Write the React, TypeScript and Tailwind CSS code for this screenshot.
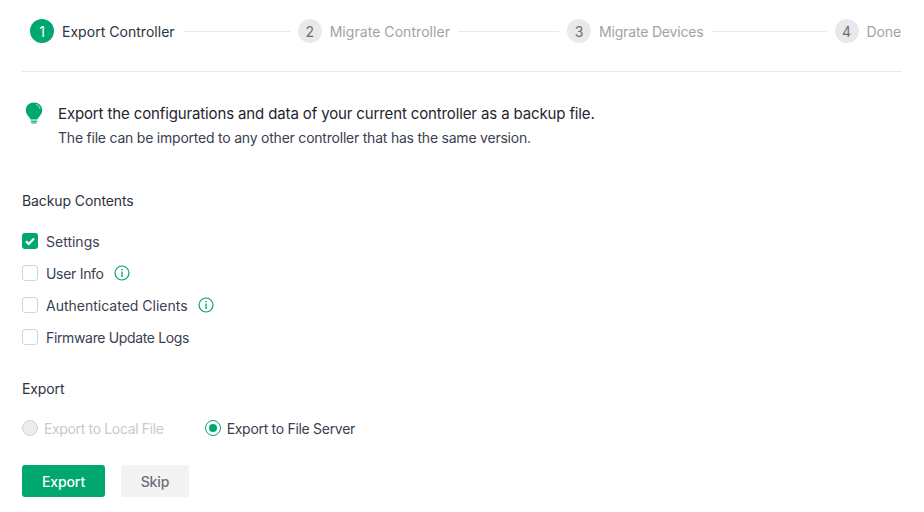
const steps = [
  { n: 1, label: 'Export Controller', line: 'w-[107px]', track: 'tracking-[0.03px]' },
  { n: 2, label: 'Migrate Controller', line: 'w-[101px]', track: 'tracking-[0.05px]' },
  { n: 3, label: 'Migrate Devices', line: 'w-[115px]', track: 'tracking-[-0.17px]' },
  { n: 4, label: 'Done', line: '', track: 'tracking-[-0.1px]' },
];

const options = [
  { label: 'Settings', checked: true, info: false, track: 'tracking-[0px]' },
  { label: 'User Info', checked: false, info: true, track: 'tracking-[-0.3px]' },
  { label: 'Authenticated Clients', checked: false, info: true, track: 'tracking-[0px]' },
  { label: 'Firmware Update Logs', checked: false, info: false, track: 'tracking-[-0.35px]' },
];

const InfoIcon = () => (
  <svg width="16" height="16" viewBox="0 0 16 16" fill="none" className="ml-[10px] shrink-0">
    <circle cx="8" cy="8" r="7" stroke="#00a870" strokeWidth="1.2" />
    <rect x="7.4" y="3.8" width="1.3" height="1.5" fill="#00a870" />
    <rect x="7.4" y="6.6" width="1.3" height="5.4" fill="#00a870" />
  </svg>
);

const Bulb = () => (
  <svg width="18" height="22" viewBox="0 0 18 22" className="shrink-0">
    <path d="M9 0.5C4.2 0.5 0.8 3.9 0.8 8.2c0 3.2 1.8 5.2 3.4 7 .8.9 1.1 1.6 1.2 2.3h7.2c.1-.7.4-1.4 1.2-2.3 1.6-1.8 3.4-3.8 3.4-7C17.2 3.9 13.8 .5 9 .5z" fill="#00a870" />
    <path d="M11.5 2.6c1.7.6 3 2 3.4 3.8" stroke="#bfeadb" strokeWidth="0.9" fill="none" strokeLinecap="round" />
    <rect x="5.8" y="18.6" width="6.4" height="1.2" fill="#00a870" />
    <rect x="6.4" y="20.4" width="5.2" height="1.1" fill="#00a870" />
  </svg>
);

export default function App() {
  return (
    <div className="w-[924px] h-[512px] bg-white overflow-hidden pl-[22px] pr-[22px] font-['Inter',sans-serif] text-[14px] tracking-[-0.1px] text-[#2b3240]">
      <div className="flex items-center h-[62px] pl-[8px] pb-[9px] border-b border-[#e8e9eb] box-content">
        {steps.map((s) => (
          <div key={s.n} className="flex items-center">
            <div
              className={
                s.n === 1
                  ? 'w-6 h-6 rounded-full bg-[#00a870] text-white flex items-center justify-center'
                  : 'w-6 h-6 rounded-full bg-[#e8e9eb] text-[#6b6f76] flex items-center justify-center'
              }
            >
              {s.n}
            </div>
            <span className={s.n === 1 ? `ml-2 whitespace-nowrap text-[#2b3240] ${s.track}` : `ml-2 whitespace-nowrap text-[#a0a3a8] ${s.track}`}>
              {s.label}
            </span>
            {s.line && <div className={`${s.line} h-px bg-[#e8e9eb] mx-2`} />}
          </div>
        ))}
      </div>

      <div className="flex mt-[30px] pl-[3px]">
        <Bulb />
        <div className="ml-[15px]">
          <div className="text-[15px] leading-[24px] tracking-[-0.13px] text-[#1f2530]">
            Export the configurations and data of your current controller as a backup file.
          </div>
          <div className="mt-[1px] leading-[22px] tracking-[-0.22px] text-[#3a4150]">
            The file can be imported to any other controller that has the same version.
          </div>
        </div>
      </div>

      <div className="mt-[42px] leading-[20px]">Backup Contents</div>

      <div className="mt-[14px] flex flex-col">
        {options.map((o) => (
          <div key={o.label} className="flex items-center h-[32px]">
            {o.checked ? (
              <div className="w-4 h-4 rounded-[3px] bg-[#00a870] flex items-center justify-center">
                <svg width="12" height="12" viewBox="0 0 12 12" fill="none">
                  <path d="M2 6.2l2.8 2.7L10 3.4" stroke="white" strokeWidth="2.2" />
                </svg>
              </div>
            ) : (
              <div className="w-4 h-4 rounded-[3px] border border-[#d3d4d6] bg-white" />
            )}
            <span className={`ml-2 text-[#3a4150] ${o.track}`}>{o.label}</span>
            {o.info && <InfoIcon />}
          </div>
        ))}
      </div>

      <div className="mt-[26px] leading-[20px]">Export</div>

      <div className="mt-[19px] flex items-center h-[20px]">
        <div className="w-4 h-4 rounded-full border border-[#d3d4d6] bg-[#ececec]" />
        <span className="ml-[6px] text-[#c9cacc] tracking-[-0.35px]">Export to Local File</span>
        <div className="ml-[41px] w-4 h-4 rounded-full border border-[#00a870] bg-white flex items-center justify-center">
          <div className="w-2 h-2 rounded-full bg-[#00a870]" />
        </div>
        <span className="ml-[6px] text-[#3a4150] tracking-[-0.3px]">Export to File Server</span>
      </div>

      <div className="mt-[27px] flex gap-4">
        <button className="w-[83px] h-[32px] rounded-[3px] bg-[#00a870] text-white font-medium">Export</button>
        <button className="w-[68px] h-[32px] rounded-[3px] bg-[#f3f3f4] text-[#6b6f76] font-medium">Skip</button>
      </div>
    </div>
  );
}
